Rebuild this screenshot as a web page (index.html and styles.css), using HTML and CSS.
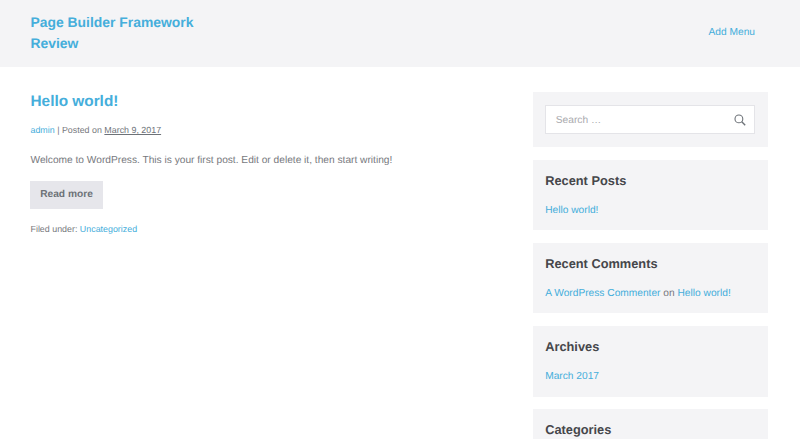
FILE: index.html
```html
<!DOCTYPE html>
<html lang="en">
<head>
<meta charset="utf-8">
<title>Page Builder Framework Review</title>
<link rel="stylesheet" href="styles.css">
</head>
<body>
<header class="site-header">
  <a class="site-title" href="#">Page Builder Framework<br>Review</a>
  <a class="menu-link" href="#">Add Menu</a>
</header>
<div class="page">
  <main class="content">
    <h1 class="post-title"><a href="#">Hello world!</a></h1>
    <p class="meta"><a href="#">admin</a> | Posted on <a class="date" href="#">March 9, 2017</a></p>
    <p class="excerpt">Welcome to WordPress. This is your first post. Edit or delete it, then start writing!</p>
    <a class="btn" href="#">Read more</a>
    <p class="filed">Filed under: <a href="#">Uncategorized</a></p>
  </main>
  <aside class="sidebar">
    <section class="widget search-widget">
      <form class="search">
        <span class="placeholder">Search …</span>
        <svg class="search-icon" width="12" height="12" viewBox="0 0 12 12" fill="none" stroke="#6d7278" stroke-width="1.1"><circle cx="4.9" cy="4.9" r="3.9"/><path d="M7.8 7.8L11.2 11.2" stroke-width="1.4"/></svg>
      </form>
    </section>
    <section class="widget">
      <h2>Recent Posts</h2>
      <p><a href="#">Hello world!</a></p>
    </section>
    <section class="widget">
      <h2>Recent Comments</h2>
      <p><a href="#">A WordPress Commenter</a> on <a href="#">Hello world!</a></p>
    </section>
    <section class="widget">
      <h2>Archives</h2>
      <p><a href="#">March 2017</a></p>
    </section>
    <section class="widget">
      <h2>Categories</h2>
    </section>
  </aside>
</div>
</body>
</html>
```
FILE: styles.css
```css
html, body { margin: 0; height: 439px; overflow: hidden; }
body { background: #fff; color: #77797e; font-family: "Liberation Sans", Arial, sans-serif; font-size: 10.2px; text-rendering: geometricPrecision; }
a { color: #45aedb; text-decoration: none; }
p { margin: 0; }
.site-header { height: 67px; background: #f4f4f6; padding: 0 45px 0 30.5px; display: flex; justify-content: space-between; align-items: center; }
.site-title { font-size: 13.9px; font-weight: 700; line-height: 21px; width: 200px; margin-top: -2px; }
.menu-link { margin-top: -2px; }
.page { display: flex; justify-content: space-between; padding: 25px 32px 0 30.5px; }
.content { width: 440px; }
.post-title { margin: 0; font-size: 15.36px; line-height: 20px; font-weight: 700; }
.meta { margin-top: 11px; font-size: 8.9px; line-height: 14px; }
.date { color: #6d7278; text-decoration: underline; }
.excerpt { margin-top: 16px; font-size: 10.18px; line-height: 16px; }
.btn { display: block; width: 73px; height: 28px; margin: 12px 0 0 -.5px; background: #e6e6eb; color: #6d7278; font-weight: 700; line-height: 28px; text-align: center; }
.filed { margin-top: 13px; font-size: 8.9px; line-height: 14px; }
.sidebar { width: 235px; flex: none; display: flex; flex-direction: column; gap: 12.8px; }
.widget { background: #f4f4f6; padding: 12.8px 12.5px 14px 12.2px; height: 70.4px; box-sizing: border-box; }
.widget h2 { margin: 0; color: #46474b; font-size: 12.8px; line-height: 16px; font-weight: 700; }
.widget p { margin-top: 14px; line-height: 15px; }
.search-widget { padding: 13px 13px 13px 12.3px; height: 55px; }
.search { height: 29px; box-sizing: border-box; background: #fff; border: 1px solid #e4e4e8; display: flex; align-items: center; justify-content: space-between; padding: 1px 8.5px 0 9.5px; }
.placeholder { color: #a9a9ad; }
```
